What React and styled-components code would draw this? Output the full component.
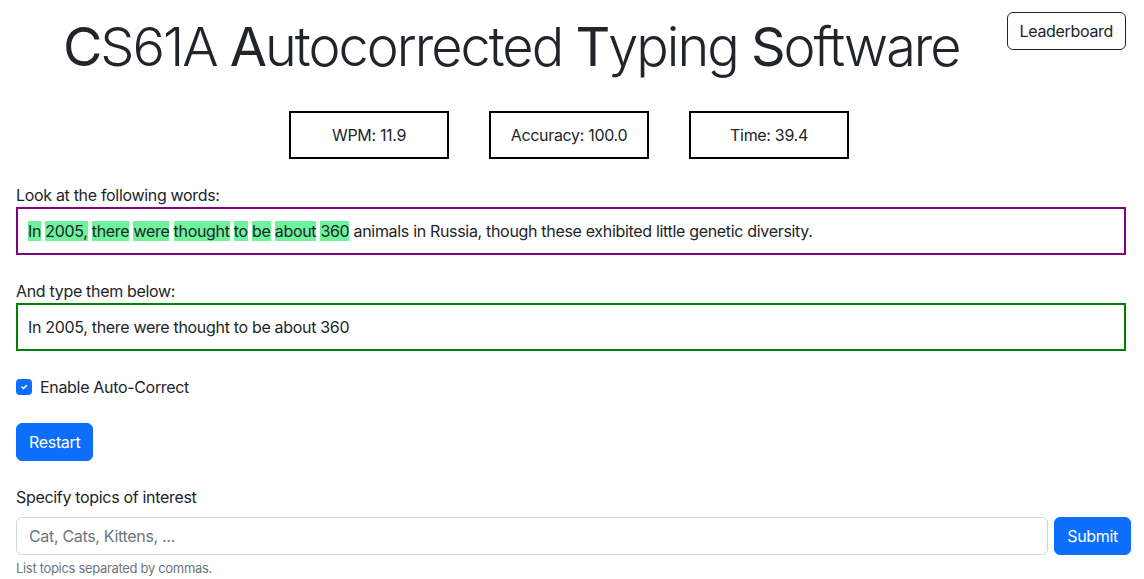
import React from "react";
import styled, { createGlobalStyle } from "styled-components";

const GlobalStyle = createGlobalStyle`
  * {
    box-sizing: border-box;
  }

  body {
    margin: 0;
    background: #fff;
    color: #212529;
    font-family: Inter, "Noto Sans", "Liberation Sans", sans-serif;
    font-size: 16px;
    line-height: 1.5;
    letter-spacing: -0.02em;
  }
`;

const Page = styled.div`
  padding: 0 18px 0 16px;
`;

const Header = styled.div`
  display: flex;
  align-items: flex-start;
`;

const Title = styled.h1`
  flex: 1;
  margin: 15px 0 0;
  text-align: center;
  white-space: nowrap;
  font-size: 54px;
  font-weight: 300;
  line-height: 1.2;
  letter-spacing: -0.037em;
`;

const Initial = styled.span`
  font-weight: 400;
`;

const OutlineButton = styled.button`
  margin-top: 12px;
  height: 38px;
  padding: 0 12px;
  border: 1px solid #212529;
  border-radius: 6px;
  background: #fff;
  color: #212529;
  font: inherit;
  letter-spacing: inherit;
  cursor: pointer;
`;

const Stats = styled.div`
  display: flex;
  justify-content: center;
  gap: 40px;
  margin: 31px 0 24px;
  padding-right: 4px;
`;

const StatBox = styled.div`
  width: 160px;
  height: 48px;
  border: 2px solid #000;
  display: flex;
  align-items: center;
  justify-content: center;
`;

const Label = styled.div`
  margin-bottom: 0;
`;

const Field = styled.div`
  display: flex;
  align-items: center;
  height: 48px;
  padding: 0 10px;
  border: 2px solid ${(p) => p.$color};
  margin-bottom: 24px;
`;

const Word = styled.span`
  background: ${(p) => (p.$hit ? "#6cf39b" : "transparent")};
`;

const CheckRow = styled.label`
  display: flex;
  align-items: center;
  gap: 8px;
  margin: 24px 0;
`;

const CheckBox = styled.span`
  width: 16px;
  height: 16px;
  border-radius: 4px;
  background: #0d6efd;
  display: flex;
  align-items: center;
  justify-content: center;
`;

const PrimaryButton = styled.button`
  height: 38px;
  padding: 0 12px;
  border: 1px solid #0d6efd;
  border-radius: 6px;
  background: #0d6efd;
  color: #fff;
  font: inherit;
  letter-spacing: inherit;
  cursor: pointer;
`;

const TopicSection = styled.div`
  margin-top: 24px;
`;

const TopicLabel = styled.div`
  margin-bottom: 8px;
`;

const InputRow = styled.div`
  display: flex;
  gap: 6px;
  margin-right: -5px;
`;

const TopicInput = styled.input`
  flex: 1;
  height: 38px;
  padding: 0 12px;
  border: 1px solid #ced4da;
  border-radius: 6px;
  font: inherit;
  letter-spacing: inherit;
  color: #212529;

  &::placeholder {
    color: #6c757d;
  }
`;

const Help = styled.div`
  margin-top: 4px;
  font-size: 13px;
  color: #6c757d;
`;

const typed = ["In", "2005,", "there", "were", "thought", "to", "be", "about", "360"];
const rest = "animals in Russia, though these exhibited little genetic diversity.";

export default function App() {
  return (
    <Page>
      <GlobalStyle />
      <Header>
        <Title>
          <Initial>C</Initial>S61A <Initial>A</Initial>utocorrected{" "}
          <Initial>T</Initial>yping <Initial>S</Initial>oftware
        </Title>
        <OutlineButton>Leaderboard</OutlineButton>
      </Header>

      <Stats>
        <StatBox>WPM: 11.9</StatBox>
        <StatBox>Accuracy: 100.0</StatBox>
        <StatBox>Time: 39.4</StatBox>
      </Stats>

      <Label>Look at the following words:</Label>
      <Field $color="#800080">
        <span>
          {typed.map((w, i) => (
            <React.Fragment key={i}>
              <Word $hit>{w}</Word>{" "}
            </React.Fragment>
          ))}
          {rest}
        </span>
      </Field>

      <Label>And type them below:</Label>
      <Field $color="#008000">In 2005, there were thought to be about 360</Field>

      <CheckRow>
        <CheckBox>
          <svg width="10" height="10" viewBox="0 0 20 20">
            <path
              d="M6 10l3 3 6-6"
              fill="none"
              stroke="#fff"
              strokeWidth="3"
              strokeLinecap="round"
              strokeLinejoin="round"
            />
          </svg>
        </CheckBox>
        Enable Auto-Correct
      </CheckRow>

      <PrimaryButton>Restart</PrimaryButton>

      <TopicSection>
        <TopicLabel>Specify topics of interest</TopicLabel>
        <InputRow>
          <TopicInput placeholder="Cat, Cats, Kittens, ..." />
          <PrimaryButton>Submit</PrimaryButton>
        </InputRow>
        <Help>List topics separated by commas.</Help>
      </TopicSection>
    </Page>
  );
}
